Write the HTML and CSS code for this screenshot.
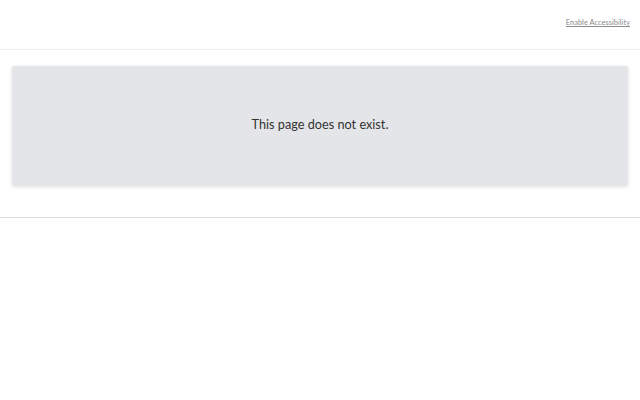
FILE: index.html
```html
<!DOCTYPE html>
<html>
<head>
<meta charset="utf-8">
<link rel="stylesheet" href="styles.css">
</head>
<body>
<header class="topbar">
  <a class="a11y" href="#">Enable Accessibility</a>
</header>
<main class="main">
  <div class="card">
    <p class="msg">This page does not exist.</p>
  </div>
</main>
<footer class="footer"></footer>
</body>
</html>
```
FILE: styles.css
```css
html, body { margin: 0; padding: 0; background: #fff; }
body { font-family: Lato, "Open Sans", sans-serif; color: #333; }
.topbar {
  height: 49px;
  border-bottom: 1px solid #eeeeee;
  display: flex;
  justify-content: flex-end;
  align-items: flex-start;
  padding-right: 10px;
  box-sizing: content-box;
}
.a11y {
  margin-top: 18px;
  font-size: 7.4px;
  letter-spacing: 0.05px;
  color: #8a8a8a;
  text-decoration: underline;
}
.main {
  padding: 16px 12px 31px 12px;
  border-bottom: 1px solid #dddddd;
}
.card {
  height: 120px;
  box-sizing: border-box;
  padding-bottom: 5px;
  background: #e4e5e8;
  border-radius: 2px;
  box-shadow: 0 1px 4px rgba(0,0,0,0.12);
  display: flex;
  align-items: center;
  justify-content: center;
}
.msg {
  margin: 0;
  font-size: 12.7px;
  color: #333;
}
```
